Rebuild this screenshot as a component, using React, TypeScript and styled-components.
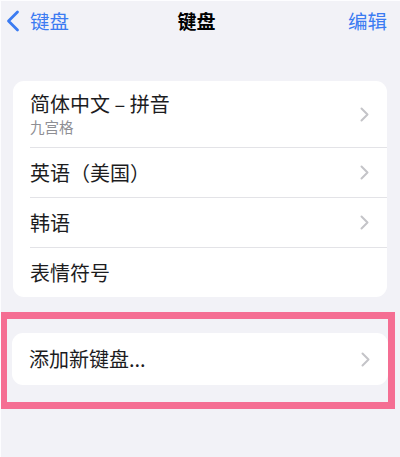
import styled, { createGlobalStyle } from "styled-components";

const GlobalStyle = createGlobalStyle`
    html, body {
        margin: 0;
        padding: 0;
        background: #f2f2f7;
    }
    body {
        font-family: "Noto Sans CJK SC", "Noto Sans", sans-serif;
        -webkit-font-smoothing: antialiased;
    }
`;

const Screen = styled.div`
    width: 400px;
    height: 457px;
    box-sizing: border-box;
    background: #f2f2f7;
    border-top: 1px solid #fdfdff;
    border-left: 1px solid #fdfdff;
    overflow: hidden;
`;

const NavBar = styled.div`
    height: 39px;
    display: grid;
    grid-template-columns: 1fr auto 1fr;
    align-items: center;
    padding: 0 13px 0 5px;
`;

const BackButton = styled.div`
    display: flex;
    align-items: center;
    gap: 10px;
    color: #3b7bf2;
    font-size: 19.5px;
    line-height: 24px;
`;

const NavTitle = styled.div`
    font-size: 19px;
    font-weight: 700;
    color: #000;
    line-height: 24px;
`;

const NavAction = styled.div`
    justify-self: end;
    color: #3b7bf2;
    font-size: 19.5px;
    line-height: 24px;
`;

const Card = styled.div`
    background: #fff;
    border-radius: 11px;
    margin: 0 13px 0 12px;
    overflow: hidden;
`;

const Row = styled.div<{ $tall?: boolean }>`
    display: flex;
    align-items: center;
    height: ${(p) => (p.$tall ? "66px" : "49px")};
    padding-left: 17px;
    & + & {
        border-top: 1px solid #e3e3e7;
        margin-left: 17px;
        padding-left: 0;
    }
`;

const Labels = styled.div`
    flex: 1;
    display: flex;
    flex-direction: column;
    gap: 2px;
`;

const Label = styled.div`
    font-size: 20px;
    line-height: 24px;
    color: #1c1c1e;
`;

const SubLabel = styled.div`
    font-size: 14.5px;
    line-height: 18px;
    color: #8e8e93;
`;

const Chevron = styled.svg`
    width: 9px;
    height: 15px;
    margin-right: 18px;
    flex: none;
`;

const Highlight = styled.div`
    margin: 15px 5px 0 -1px;
    border: 7.5px solid #f56e93;
    padding: 14px 0 17px 5px;
`;

const HighlightCard = styled(Card)`
    margin: 0;
`;

const AddRow = styled(Row)`
    height: 52px;
`;

const Spacer = styled.div`
    height: 41px;
`;

const Arrow = () => (
    <Chevron viewBox="0 0 9 15">
        <path
            d="M1.5 1.5 L7.5 7.5 L1.5 13.5"
            fill="none"
            stroke="#c4c4c8"
            strokeWidth="2"
            strokeLinecap="round"
            strokeLinejoin="round"
        />
    </Chevron>
);

const keyboards = [
    { name: "简体中文 – 拼音", sub: "九宫格", arrow: true },
    { name: "英语（美国）", arrow: true },
    { name: "韩语", arrow: true },
    { name: "表情符号", arrow: false },
];

const App = () => {
    return (
        <>
            <GlobalStyle />
            <Screen>
                <NavBar>
                    <BackButton>
                        <svg width="14" height="22" viewBox="0 0 14 22">
                            <path
                                d="M11.5 2 L2.5 11 L11.5 20"
                                fill="none"
                                stroke="#3b7bf2"
                                strokeWidth="2.8"
                                strokeLinecap="round"
                                strokeLinejoin="round"
                            />
                        </svg>
                        键盘
                    </BackButton>
                    <NavTitle>键盘</NavTitle>
                    <NavAction>编辑</NavAction>
                </NavBar>
                <Spacer />
                <Card>
                    {keyboards.map((k) => (
                        <Row key={k.name} $tall={!!k.sub}>
                            <Labels>
                                <Label>{k.name}</Label>
                                {k.sub && <SubLabel>{k.sub}</SubLabel>}
                            </Labels>
                            {k.arrow && <Arrow />}
                        </Row>
                    ))}
                </Card>
                <Highlight>
                    <HighlightCard>
                        <AddRow>
                            <Labels>
                                <Label>添加新键盘...</Label>
                            </Labels>
                            <Arrow />
                        </AddRow>
                    </HighlightCard>
                </Highlight>
            </Screen>
        </>
    );
};

export default App;
